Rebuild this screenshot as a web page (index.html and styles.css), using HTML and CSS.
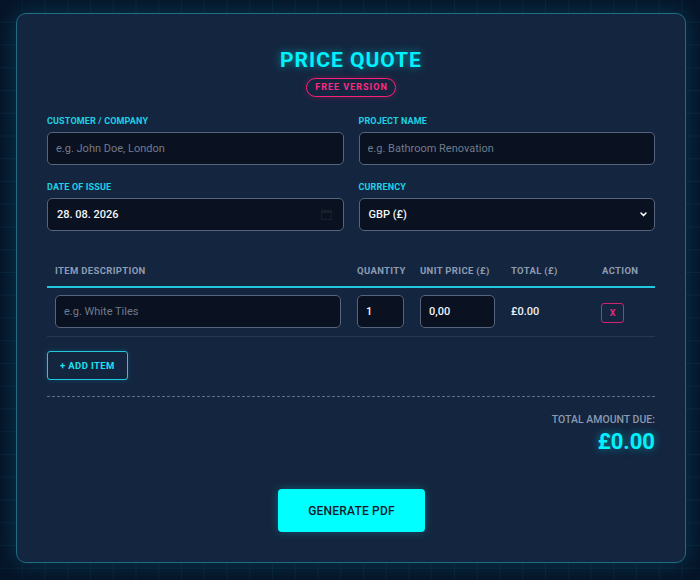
FILE: index.html
```html
<!DOCTYPE html>
<html lang="en">
<head>
<meta charset="utf-8">
<title>Price Quote</title>
<link rel="stylesheet" href="styles.css">
</head>
<body>
<main class="card">
  <header class="head">
    <h1 class="title">PRICE QUOTE</h1>
    <span class="badge">FREE VERSION</span>
  </header>

  <section class="fields">
    <div class="field">
      <label class="label">CUSTOMER / COMPANY</label>
      <input class="input" type="text" placeholder="e.g. John Doe, London">
    </div>
    <div class="field">
      <label class="label">PROJECT NAME</label>
      <input class="input" type="text" placeholder="e.g. Bathroom Renovation">
    </div>
    <div class="field">
      <label class="label">DATE OF ISSUE</label>
      <div class="input box">
        <span class="value">28. 08. 2026</span>
        <svg class="cal" width="11" height="11" viewBox="0 0 11 11"><rect x="0.5" y="1.5" width="10" height="9" fill="none" stroke="#1a202a" stroke-width="1"/><rect x="0.5" y="1.5" width="10" height="2.5" fill="#1a202a"/></svg>
      </div>
    </div>
    <div class="field">
      <label class="label">CURRENCY</label>
      <div class="input box">
        <span class="value">GBP (£)</span>
        <svg class="chev" width="7" height="5" viewBox="0 0 7 5"><path d="M1 1 L3.5 3.6 L6 1" fill="none" stroke="#ffffff" stroke-width="1.5" stroke-linecap="round" stroke-linejoin="round"/></svg>
      </div>
    </div>
  </section>

  <section class="table">
    <div class="trow thead">
      <div class="cell">ITEM DESCRIPTION</div>
      <div class="cell">QUANTITY</div>
      <div class="cell">UNIT PRICE (£)</div>
      <div class="cell">TOTAL (£)</div>
      <div class="cell act">ACTION</div>
    </div>
    <div class="trow tbody">
      <div class="cell"><input class="input" type="text" placeholder="e.g. White Tiles"></div>
      <div class="cell"><input class="input" type="text" value="1"></div>
      <div class="cell"><input class="input" type="text" value="0,00"></div>
      <div class="cell total">£0.00</div>
      <div class="cell act"><button class="del">X</button></div>
    </div>
  </section>

  <button class="add">+ ADD ITEM</button>

  <section class="sum">
    <div class="sum-label">TOTAL AMOUNT DUE:</div>
    <div class="sum-value">£0.00</div>
  </section>

  <div class="actions">
    <button class="pdf">GENERATE PDF</button>
  </div>
</main>
</body>
</html>
```

FILE: styles.css
```css
* { box-sizing: border-box; }

html, body {
  margin: 0;
  height: 100%;
}

body {
  padding: 13px 14px 0 16px;
  font-family: Roboto, "Liberation Sans", sans-serif;
  background-color: #061428;
  background-image:
    linear-gradient(rgba(40, 120, 160, 0.10) 1px, transparent 1px),
    linear-gradient(90deg, rgba(40, 120, 160, 0.10) 1px, transparent 1px);
  background-size: 22.75px 22.75px;
  background-position: -1px -1px;
  overflow: hidden;
}

.card {
  background: #14253f;
  border: 1px solid #1f6c83;
  border-radius: 10px;
  box-shadow: 0 0 22px rgba(0, 190, 230, 0.22);
  padding: 34px 30px 30px;
  display: flex;
  flex-direction: column;
}

.head {
  display: flex;
  flex-direction: column;
  align-items: center;
}

.title {
  margin: 0;
  font-size: 21px;
  line-height: 24px;
  font-weight: 700;
  letter-spacing: 1px;
  color: #00f2ff;
  text-shadow: 0 0 8px rgba(0, 240, 255, 0.55);
}

.badge {
  margin-top: 6px;
  border: 1.5px solid #ff1f78;
  border-radius: 12px;
  padding: 0 7px 0 8px;
  font-size: 9px;
  line-height: 17px;
  font-weight: 700;
  letter-spacing: 1px;
  color: #ff2a80;
  box-shadow: 0 0 6px rgba(255, 30, 120, 0.25);
}

.fields {
  margin-top: 18px;
  display: grid;
  grid-template-columns: 1fr 1fr;
  column-gap: 15px;
  row-gap: 16px;
}

.field {
  display: flex;
  flex-direction: column;
}

.label {
  font-size: 9px;
  line-height: 12px;
  font-weight: 700;
  letter-spacing: 0.15px;
  color: #1fd2e4;
  margin-bottom: 5px;
}

.input {
  width: 100%;
  height: 33px;
  background: #0a1120;
  border: 1px solid #56657c;
  border-radius: 5px;
  padding: 0 8px;
  font-family: Roboto, "Liberation Sans", sans-serif;
  font-size: 11px;
  font-weight: 500;
  color: #f2f6fa;
  outline: none;
}

.input::placeholder {
  color: #6f7b8e;
  font-weight: 400;
}

.box {
  display: flex;
  align-items: center;
  justify-content: space-between;
}

.value {
  color: #f4f7fb;
  font-size: 11px;
  font-weight: 500;
  padding-left: 1px;
}

.cal { margin-right: 3px; }
.chev { margin-right: -1px; }

.table {
  margin-top: 26px;
}

.trow {
  display: grid;
  grid-template-columns: 302px 63px 91px 91px 61px;
  align-items: center;
}

.cell {
  padding: 0 8px;
}

.thead {
  padding: 8px 0 9px;
  border-bottom: 2px solid #22c9de;
}

.thead .cell {
  font-size: 9.5px;
  line-height: 12px;
  font-weight: 700;
  letter-spacing: 0.35px;
  color: #8d9cb3;
  white-space: nowrap;
}

.tbody {
  padding: 7px 0 8px;
  border-bottom: 1px solid #28384f;
}

.total {
  font-size: 11px;
  font-weight: 500;
  color: #eef3f8;
}

.act { padding-left: 8px; }

.del {
  width: 23px;
  height: 20px;
  margin-left: -1px;
  padding: 0;
  background: transparent;
  border: 1.5px solid #d1236f;
  border-radius: 3px;
  color: #e52a7a;
  font-family: Roboto, "Liberation Sans", sans-serif;
  font-size: 9px;
  font-weight: 700;
}

.add {
  align-self: flex-start;
  margin-top: 14px;
  height: 29px;
  padding: 0 12px;
  background: transparent;
  border: 1.5px solid #22c9de;
  border-radius: 3px;
  color: #1fe0f0;
  font-family: Roboto, "Liberation Sans", sans-serif;
  font-size: 9.5px;
  font-weight: 700;
  letter-spacing: 0.4px;
  box-shadow: 0 0 5px rgba(0, 220, 255, 0.2);
}

.sum {
  margin-top: 16px;
  border-top: 1px dashed #5f6e84;
  padding-top: 16px;
  display: flex;
  flex-direction: column;
  align-items: flex-end;
}

.sum-label {
  font-size: 10.5px;
  line-height: 13px;
  font-weight: 500;
  color: #8a99af;
}

.sum-value {
  margin-top: 3px;
  font-size: 22px;
  line-height: 26px;
  font-weight: 700;
  color: #00f2ff;
  text-shadow: 0 0 8px rgba(0, 240, 255, 0.5);
}

.actions {
  margin-top: 34px;
  display: flex;
  justify-content: center;
}

.pdf {
  width: 147px;
  height: 43px;
  margin-left: 1px;
  background: #00ffff;
  border: none;
  border-radius: 4px;
  color: #0f1b2d;
  font-family: Roboto, "Liberation Sans", sans-serif;
  font-size: 12px;
  font-weight: 500;
  letter-spacing: 0.2px;
  box-shadow: 0 0 10px rgba(0, 255, 255, 0.25);
}
```
